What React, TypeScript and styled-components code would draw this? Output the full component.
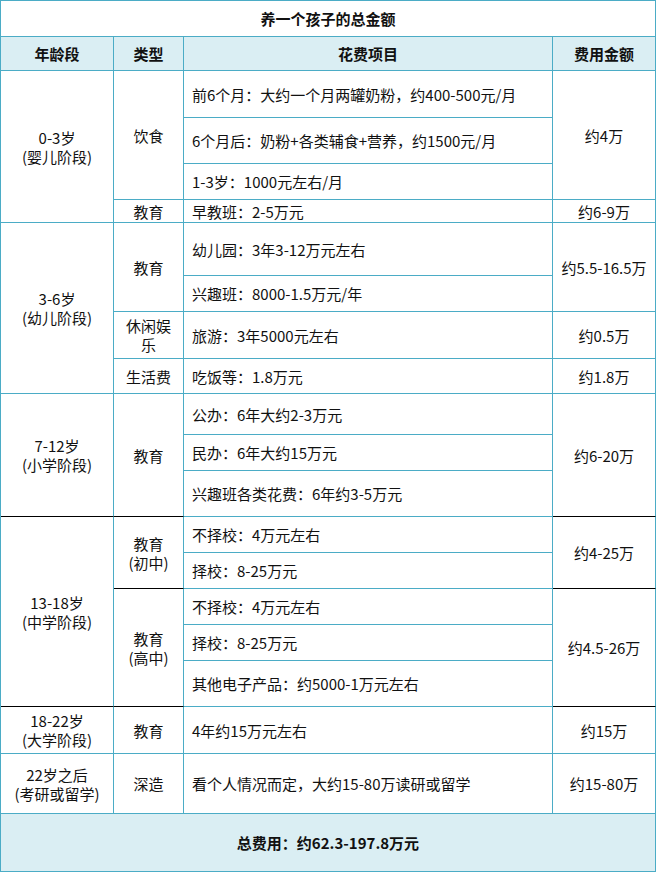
import React from 'react'
import styled, { createGlobalStyle } from 'styled-components'

const TEAL = '#4bacc6'
const DARK = '#000000'
const HEAD_BG = '#daeef3'

type Item = [string, number]
type Group = { type: string[]; items: Item[]; amount: string }
type Section = { age: string[]; dark?: boolean; groups: Group[] }

const sections: Section[] = [
  {
    age: ['0-3岁', '(婴儿阶段)'],
    groups: [
      {
        type: ['饮食'],
        items: [
          ['前6个月：大约一个月两罐奶粉，约400-500元/月', 47],
          ['6个月后：奶粉+各类辅食+营养，约1500元/月', 46],
          ['1-3岁：1000元左右/月', 36],
        ],
        amount: '约4万',
      },
      { type: ['教育'], items: [['早教班：2-5万元', 23]], amount: '约6-9万' },
    ],
  },
  {
    age: ['3-6岁', '(幼儿阶段)'],
    groups: [
      {
        type: ['教育'],
        items: [
          ['幼儿园：3年3-12万元左右', 53],
          ['兴趣班：8000-1.5万元/年', 36],
        ],
        amount: '约5.5-16.5万',
      },
      { type: ['休闲娱', '乐'], items: [['旅游：3年5000元左右', 47]], amount: '约0.5万' },
      { type: ['生活费'], items: [['吃饭等：1.8万元', 35]], amount: '约1.8万' },
    ],
  },
  {
    age: ['7-12岁', '(小学阶段)'],
    dark: true,
    groups: [
      {
        type: ['教育'],
        items: [
          ['公办：6年大约2-3万元', 41],
          ['民办：6年大约15万元', 36],
          ['兴趣班各类花费：6年约3-5万元', 46],
        ],
        amount: '约6-20万',
      },
    ],
  },
  {
    age: ['13-18岁', '(中学阶段)'],
    dark: true,
    groups: [
      {
        type: ['教育', '(初中)'],
        items: [
          ['不择校：4万元左右', 36],
          ['择校：8-25万元', 36],
        ],
        amount: '约4-25万',
      },
      {
        type: ['教育', '(高中)'],
        items: [
          ['不择校：4万元左右', 36],
          ['择校：8-25万元', 36],
          ['其他电子产品：约5000-1万元左右', 46],
        ],
        amount: '约4.5-26万',
      },
    ],
  },
  {
    age: ['18-22岁', '(大学阶段)'],
    groups: [{ type: ['教育'], items: [['4年约15万元左右', 47]], amount: '约15万' }],
  },
  {
    age: ['22岁之后', '(考研或留学)'],
    groups: [
      {
        type: ['深造'],
        items: [['看个人情况而定，大约15-80万读研或留学', 60]],
        amount: '约15-80万',
      },
    ],
  },
]

const Lines = ({ lines }: { lines: string[] }) => (
  <>
    {lines.map((l, i) => (
      <React.Fragment key={i}>
        {i > 0 && <br />}
        {l}
      </React.Fragment>
    ))}
  </>
)

const App = () => {
  return (
    <>
      <GlobalStyle />
      <Sheet>
        <Title>养一个孩子的总金额</Title>
        <HeadCell>年龄段</HeadCell>
        <HeadCell>类型</HeadCell>
        <HeadCell>花费项目</HeadCell>
        <HeadCell>费用金额</HeadCell>
        {sections.map((s, si) => {
          const total = s.groups.reduce((n, g) => n + g.items.length, 0)
          return (
            <React.Fragment key={si}>
              <SpanCell $span={total} $dark={s.dark}>
                <Lines lines={s.age} />
              </SpanCell>
              {s.groups.map((g, gi) => (
                <React.Fragment key={gi}>
                  <SpanCell $span={g.items.length} $dark={s.dark}>
                    <Lines lines={g.type} />
                  </SpanCell>
                  <ItemCell $h={g.items[0][1]}>{g.items[0][0]}</ItemCell>
                  <SpanCell $span={g.items.length} $dark={s.dark}>
                    {g.amount}
                  </SpanCell>
                  {g.items.slice(1).map(([text, h], ii) => (
                    <ItemCell key={ii} $h={h}>
                      {text}
                    </ItemCell>
                  ))}
                </React.Fragment>
              ))}
            </React.Fragment>
          )
        })}
        <Total>总费用：约62.3-197.8万元</Total>
      </Sheet>
    </>
  )
}

const GlobalStyle = createGlobalStyle`
  html, body {
    margin: 0;
    padding: 0;
    background: #ffffff;
  }
  body {
    font-family: 'Noto Sans CJK SC', 'Noto Sans', sans-serif;
    font-size: 15px;
    color: #111111;
  }
  * {
    box-sizing: border-box;
  }
`

const Sheet = styled.div`
  display: grid;
  grid-template-columns: 113px 70px 369px 103px;
  grid-auto-flow: row;
  width: 656px;
  border-top: 1px solid ${TEAL};
  border-left: 1px solid ${TEAL};
`

const Cell = styled.div`
  display: flex;
  align-items: center;
  border-right: 1px solid ${TEAL};
  border-bottom: 1px solid ${TEAL};
  line-height: 19px;
`

const Title = styled(Cell)`
  grid-column: 1 / -1;
  height: 36px;
  justify-content: center;
  font-weight: 700;
`

const HeadCell = styled(Cell)`
  height: 34px;
  justify-content: center;
  font-weight: 700;
  background: ${HEAD_BG};
`

const SpanCell = styled(Cell)<{ $span: number; $dark?: boolean }>`
  grid-row: span ${(p) => p.$span};
  justify-content: center;
  text-align: center;
  padding: 0 2px;
  white-space: nowrap;
  border-bottom-color: ${(p) => (p.$dark ? DARK : TEAL)};
`

const ItemCell = styled(Cell)<{ $h: number }>`
  grid-column: 3;
  height: ${(p) => p.$h}px;
  padding: 0 8px;
  white-space: nowrap;
`

const Total = styled(Cell)`
  grid-column: 1 / -1;
  height: 58px;
  justify-content: center;
  font-weight: 700;
  background: ${HEAD_BG};
`

export default App
